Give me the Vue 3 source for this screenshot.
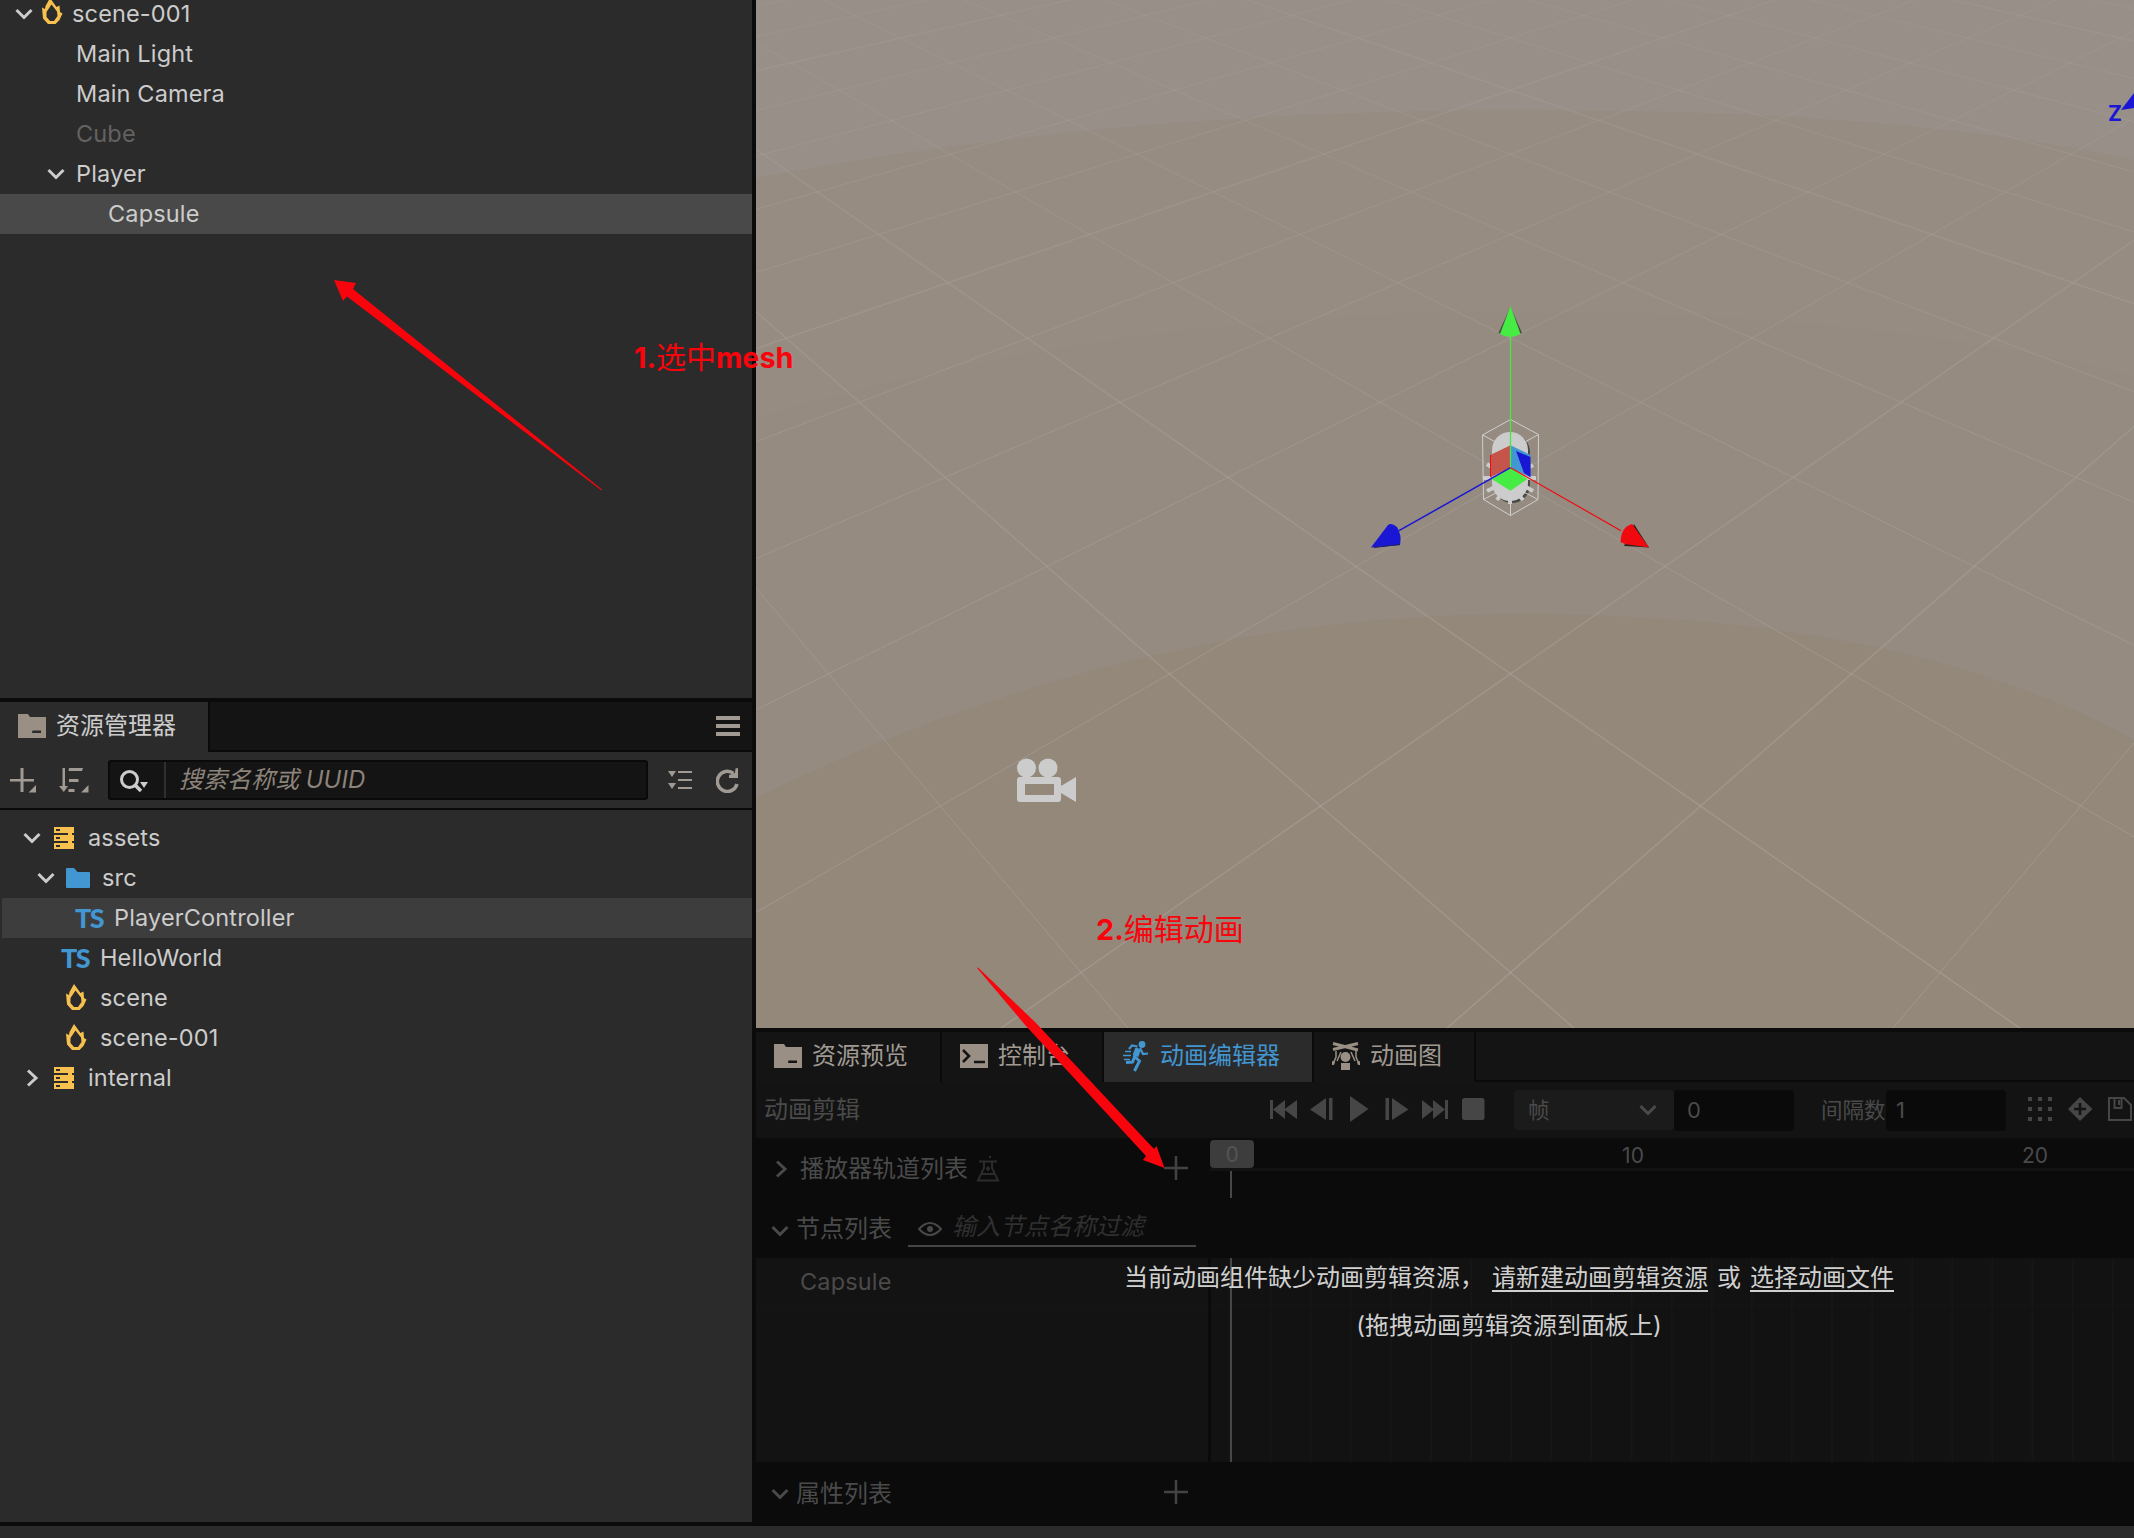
<script setup>
const hierarchy = [
  { name: 'scene-001', text: 73, arrow: 15, fire: 42 },
  { name: 'Main Light', text: 76 },
  { name: 'Main Camera', text: 76 },
  { name: 'Cube', text: 76, disabled: true },
  { name: 'Player', text: 76, arrow: 47 },
  { name: 'Capsule', text: 108, selected: true },
]
const assets = [
  { name: 'assets', text: 88, arrow: 23, icon: 'db', iconX: 54 },
  { name: 'src', text: 102, arrow: 37, icon: 'folder', iconX: 66 },
  { name: 'PlayerController', text: 114, icon: 'ts', iconX: 75, hovered: true },
  { name: 'HelloWorld', text: 100, icon: 'ts', iconX: 61 },
  { name: 'scene', text: 100, icon: 'fire', iconX: 66 },
  { name: 'scene-001', text: 100, icon: 'fire', iconX: 66 },
  { name: 'internal', text: 88, arrow: 25, closed: true, icon: 'db', iconX: 54 },
]

// Perspective floor grid, seen along its diagonal
const project = (x, z) => {
  const h = 1 / (0.00078 + 0.00008965 * z)
  return [1510.5 + x * 0.14825 * h, h - 476]
}
const gridLines = []
for (let m = -25; m <= 25; m += 2) {
  for (const dir of [1, -1]) {
    const [x1, y1] = project(dir * (m + 3), -3)
    const [x2, y2] = project(dir * (m - 17), 17)
    gridLines.push({ x1, y1, x2, y2, strong: Math.abs(m) % 10 === 1 })
  }
}
const frames = Array.from({ length: 23 }, (_, i) => 1230.5 + i * 40.1)
</script>

<template>
  <div class="editor">
    <div class="main">
      <aside class="left">
        <section class="hierarchy">
          <div v-for="(n, i) in hierarchy" :key="i" class="row" :class="{ selected: n.selected, disabled: n.disabled }" :style="{ paddingLeft: (n.arrow || n.text) + 'px' }">
            <svg v-if="n.arrow" class="chev" width="18" height="12" viewBox="0 0 18 12"><path d="M1.5 2 9 9.500 16.500 2" /></svg>
            <svg v-if="n.fire" class="fire after-arrow" width="21" height="27" viewBox="0 0 21 27"><path fill-rule="evenodd" d="M8 0 14.500 9 17.500 7.500 18 14 20.500 15.500 17.500 22 13.500 26 6 26 1 20.500 0 9.500 3 11 3.500 8ZM9.500 6.500 4.500 14 4.500 19 8 23 12 23 15.500 18 15 13.500Z" /></svg>
            <span class="label" :style="{ marginLeft: n.fire ? '9px' : n.arrow ? '11px' : 0 }">{{ n.name }}</span>
          </div>
        </section>

        <section class="assets">
          <header class="panel-head">
            <div class="head-tab">
              <svg width="28" height="24" viewBox="0 0 28 24"><path fill="#9a8f84" fill-rule="evenodd" d="M0 0H10L12 3H28V24H0ZM14.500 16.500 14 19H23V16.500Z" /></svg>
              <span>资源管理器</span>
            </div>
            <div class="head-rest">
              <svg width="24" height="20" viewBox="0 0 24 20"><path fill="#a09a93" d="M0 0H24V4H0ZM0 8H24V12H0ZM0 16H24V20H0Z" /></svg>
            </div>
          </header>
          <div class="asset-tools">
            <svg width="27" height="25" viewBox="0 0 27 25"><path fill="#a09a93" d="M10.500 0H13.500V11H24V13.500H13.500V24H10.500V13.500H0V11H10.500ZM26 17V24.500H18.500Z" /></svg>
            <svg class="sort" width="30" height="25" viewBox="0 0 30 25"><path fill="#a09a93" d="M3.500 0H6V18H9L4.800 24 0 18H3.500ZM10 0H24L23 3H9.500ZM10 11H19.500V14H10ZM9.500 21H15.500V24H9.500ZM29.500 17V24.500H22Z" /></svg>
            <div class="search">
              <div class="search-kind">
                <svg width="29" height="23" viewBox="0 0 29 23"><circle cx="9.500" cy="9.500" r="8" fill="none" stroke="#ccc" stroke-width="3" /><path d="m15 15 6 6" stroke="#ccc" stroke-width="3.500" /><path d="M20 12H28L24 18Z" fill="#ccc" /></svg>
              </div>
              <span>搜索名称或 UUID</span>
            </div>
            <svg class="collapse" width="25" height="20" viewBox="0 0 25 20"><path fill="#a09a93" d="M0 1H8L4 7ZM0 13H8L4 19ZM10 1H24V3H10ZM10 9H24V11H10ZM10 17H24V19H10Z" /></svg>
            <svg class="refresh" width="24" height="25" viewBox="0 0 24 25"><path d="M17.500 5.500A10 10 0 1 0 21 16" fill="none" stroke="#a09a93" stroke-width="3.500" /><path d="M19.500 0.500 22 0V10H13V7L19 5Z" fill="#a09a93" /></svg>
          </div>
          <div class="tree">
            <div v-for="(n, i) in assets" :key="i" class="row" :class="{ hovered: n.hovered }">
              <span class="slot" :style="{ width: n.iconX + 'px', paddingLeft: (n.arrow || 0) + 'px' }">
                <svg v-if="n.arrow && !n.closed" class="chev" width="18" height="12" viewBox="0 0 18 12"><path d="M1.500 2 9 9.500 16.500 2" /></svg>
                <svg v-if="n.closed" class="chev" width="14" height="18" viewBox="0 0 14 18"><path d="M3 1.500 11 9 3 16.500" /></svg>
              </span>
              <span class="slot" :style="{ width: n.text - n.iconX + 'px' }">
                <svg v-if="n.icon === 'db'" width="20" height="22" viewBox="0 0 20 22"><path fill="#f7c14f" fill-rule="evenodd" d="M0 0H20V6H0ZM0 8H20V14H0ZM0 16H20V22H0ZM2 2V4H6V2ZM2 10V12H6V10ZM2 18V20H6V18ZM14 6H18V8H14ZM14 14H18V16H14Z" /></svg>
                <svg v-if="n.icon === 'folder'" width="24" height="20" viewBox="0 0 24 20"><path fill="#4296d1" d="M0 1Q0 0 1 0H8L11.500 4H23Q24 4 24 5V19Q24 20 23 20H1Q0 20 0 19Z" /></svg>
                <b v-if="n.icon === 'ts'" class="ts">TS</b>
                <svg v-if="n.icon === 'fire'" class="fire low" width="21" height="27" viewBox="0 0 21 27"><path fill-rule="evenodd" d="M8 0 14.500 9 17.500 7.500 18 14 20.500 15.500 17.500 22 13.500 26 6 26 1 20.500 0 9.500 3 11 3.500 8ZM9.500 6.500 4.500 14 4.500 19 8 23 12 23 15.500 18 15 13.500Z" /></svg>
              </span>
              <span class="label">{{ n.name }}</span>
            </div>
          </div>
        </section>
      </aside>

      <div class="right">
        <svg class="scene" width="1378" height="1028" viewBox="756 0 1378 1028">
          <defs>
            <linearGradient id="fade" gradientUnits="userSpaceOnUse" x1="0" y1="0" x2="0" y2="1028">
              <stop offset="0" stop-color="#b5aeaa" stop-opacity=".14" />
              <stop offset=".35" stop-color="#b0aaa5" stop-opacity=".32" />
              <stop offset="1" stop-color="#afa6a2" stop-opacity=".5" />
            </linearGradient>
          </defs>
          <rect x="756" width="1378" height="1028" fill="#998f89" />
          <path d="M756 178Q1100 112 1500 110T2134 160V1028H756Z" fill="#978c82" />
          <path d="M756 418Q1100 316 1480 312T2134 376V1028H756Z" fill="#958b81" />
          <path d="M756 798Q1130 614 1520 614T2134 740V1028H756Z" fill="#94887b" />
          <g stroke="url(#fade)" fill="none">
            <line v-for="(l, i) in gridLines" :key="i" :x1="l.x1" :y1="l.y1" :x2="l.x2" :y2="l.y2" :stroke-width="l.strong ? 1.4 : 1" />
          </g>
          <!-- camera -->
          <g fill="#ccc">
            <circle cx="1026.500" cy="768" r="9.500" /><circle cx="1048" cy="768" r="9.500" />
            <path fill-rule="evenodd" d="M1020 777H1058Q1061 777 1061 780V786L1076 777V802L1061 793V799Q1061 802 1058 802H1020Q1017 802 1017 799V780Q1017 777 1020 777ZM1025 784V795H1054V784Z" />
          </g>
          <!-- selected capsule and its bounds -->
          <rect x="1494" y="434" width="36" height="69" rx="18" fill="#4b4946" />
          <rect x="1492" y="432" width="36" height="69" rx="18" fill="#ccc" />
          <path d="M1487 464 1493 468M1483 478H1491M1487 491 1495 487M1497 500 1501 494M1510 504V496M1523 500 1518 494M1533 491 1526 487M1536 478H1528M1533 465 1526 469" stroke="#ccc" stroke-width="4" fill="none" />
          <path d="M1510.500 419.500 1482.500 435 1483.500 499.500 1510.500 515.500 1538 499.500 1538.500 434.500ZM1482.500 435 1510.500 450 1538.500 434.500M1483.500 499.500 1510.500 485 1538 499.500M1510.500 515.500V485" stroke="#d0cfcd" fill="none" />
          <path d="M1490.300 455 1510.500 445.300V467.700L1490.300 477.300Z" fill="#c5544b" /><path d="M1490.500 455V477" stroke="#f00a10" />
          <path d="M1510.500 445.300 1530.500 455V477.500L1510.500 467.700Z" fill="#4296d1" /><path d="M1516 451 1530.500 457V477L1524 473Z" fill="#1a17d4" />
          <path d="M1510.500 467.700 1527.500 479 1510.500 490.700 1492 479.300Z" fill="#46ec43" />
          <path d="M1510.500 335V468" stroke="#46ec43" stroke-width="1.300" />
          <path d="M1399 530.700 1510.500 467.700" stroke="#1a17d4" stroke-width="1.500" />
          <path d="M1621 530.700 1510.500 467.700" stroke="#f00a10" stroke-width="1.200" />
          <path d="M1510.500 307 1498.500 333 1510 336 1522 333Z" fill="#4a4b42" />
          <path d="M1510.500 306 1500 334Q1510 340 1520.500 334Z" fill="#46ec43" />
          <path d="M1371 547.500 1388 525Q1391 522 1397 527 1402 535 1400 545Z" fill="#1a17d4" /><path d="M1374 547.500 1400 544.500" stroke="#20205c" />
          <path d="M1649 547.500 1634 524 1624 546Z" fill="#33231f" />
          <path d="M1649 547.500 1632 524Q1621 527 1620.500 542L1625 544Z" fill="#f00a10" />
          <path d="M2121 110 2134 93V108Z" fill="#1a17d4" />
          <text x="2108" y="121" font-size="21" font-weight="700" fill="#1a17d4" font-family="Inter, sans-serif">Z</text>
        </svg>

        <section class="anim">
          <nav class="tabs">
            <div class="tab t1">
              <svg width="28" height="24" viewBox="0 0 28 24"><path fill="#9a8f84" fill-rule="evenodd" d="M0 0H10L12 3H28V24H0ZM14.500 16.500 14 19H23V16.500Z" /></svg>
              <span>资源预览</span>
            </div>
            <div class="tab t2">
              <svg width="28" height="24" viewBox="0 0 28 24"><path fill="#9a8f84" d="M0 0H28V24H0Z" /><path d="M3 6 9 12 3 18M14 18H25" fill="none" stroke="#141414" stroke-width="2.600" /></svg>
              <span>控制台</span>
            </div>
            <div class="tab t3 active">
              <svg width="26" height="31" viewBox="0 0 26 31"><circle cx="19" cy="3.500" r="3.400" fill="#4296d1" /><g fill="none" stroke="#4296d1"><path d="M6 8 9 4.500 14.500 5.500M17 7 20 13 25 12.500" stroke-width="2.200" /><path d="M14.500 7 11.500 15.500 16.500 20 11.500 30M12 15 9.500 21 3 21.500" stroke-width="3" /><path d="M15 8 12.500 15" stroke-width="6" /><path d="M2 10.500H8M0 14.500H8M1 18.500H7" stroke-width="1.300" /></g></svg>
              <span>动画编辑器</span>
            </div>
            <div class="tab t4">
              <svg width="28" height="28" viewBox="0 0 28 28"><g fill="none" stroke="#9a8f84"><path d="M1 1.500 26 8M1 7.500 26 1.500" stroke-width="3" /><path d="M4 9V15L1 22M24 9V15L27 22M9 10 5 19M19 10 23 19" stroke-width="1.500" /></g><circle cx="13.500" cy="15" r="5" fill="#9a8f84" /><path fill="#9a8f84" d="M9 21H18V28H9ZM0 19 3 20 2 23H0ZM25 20 28 19V23H26Z" /></svg>
              <span>动画图</span>
            </div>
            <div class="tab-rest"></div>
          </nav>

          <div class="toolbar">
            <span class="clip">动画剪辑</span>
            <svg class="play" width="216" height="26" viewBox="0 0 216 26"><g fill="#464646"><path d="M0 4H3V23H0ZM15 4V23L3 13.500ZM27 4V23L14 13.500Z" /><path d="M40 13.500 56 2V24ZM59 2H62.500V24H59Z" /><path d="M80 0 98.500 13 80 26Z" /><path d="M115.500 2H119V24H115.500ZM122 2V24L138.500 13.500Z" /><path d="M152 4V23L164 13.500ZM163 4V23L175 13.500ZM175 4H178V23H175Z" /><rect x="192" y="2" width="22.500" height="22" rx="2.500" /></g></svg>
            <div class="select">
              <span>帧</span>
              <svg class="chev" width="18" height="12" viewBox="0 0 18 12"><path d="M1.500 2 9 9.500 16.500 2" /></svg>
            </div>
            <div class="field f1">0</div>
            <span class="gap-label">间隔数</span>
            <div class="field f2">1</div>
            <svg class="extras" width="106" height="26" viewBox="0 0 106 26"><g fill="#464646"><path d="M0 1h4v4h-4zM10 1h4v4h-4zM20 1h4v4h-4zM0 11h4v4h-4zM10 11h4v4h-4zM20 11h4v4h-4zM0 21h4v4h-4zM10 21h4v4h-4zM20 21h4v4h-4z" /><path d="M52 1 64.500 13 52 25 40 13Z" /></g><path d="M52 7V19M46 13H58" stroke="#131313" stroke-width="2.600" /><path d="M81 2H96L103 9V24H81ZM86.500 2V12H93.500V2M91 4V9" fill="none" stroke="#464646" stroke-width="2" /></svg>
          </div>

          <div class="timeline">
            <div class="side">
              <div class="player-track">
                <svg class="chev" width="14" height="18" viewBox="0 0 14 18"><path d="M3 1.500 11 9 3 16.500" /></svg>
                <span>播放器轨道列表</span>
                <svg class="flask" width="24" height="27" viewBox="0 0 24 27"><path d="M3 5.500H21M8 6V12L2 24.500H22L16 12V6M6 18H18M12 10.500V15M10 12.500H14M14 0V2" fill="none" stroke="#2c2c2c" stroke-width="2" /></svg>
                <svg class="plus" width="24" height="24" viewBox="0 0 24 24"><path d="M12 0V24M0 12H24" stroke="#434343" stroke-width="2.500" /></svg>
              </div>
              <div class="node-head">
                <svg class="chev" width="18" height="12" viewBox="0 0 18 12"><path d="M1.500 2 9 9.500 16.500 2" /></svg>
                <span>节点列表</span>
                <div class="filter">
                  <svg width="24" height="14" viewBox="0 0 24 14"><path d="M1 7Q12-5 23 7 12 19 1 7Z" fill="none" stroke="#484848" stroke-width="2" /><circle cx="12" cy="7" r="3" fill="#484848" /></svg>
                  <i>输入节点名称过滤</i>
                </div>
              </div>
            </div>
            <div class="ruler">
              <div class="ruler-head">
                <span class="cursor">0</span><span class="n10">10</span><span class="n20">20</span>
              </div>
              <div class="stem"></div>
            </div>
          </div>
          <div class="nodes">
            <div class="node-list"><div class="node">Capsule</div></div>
            <svg class="frames" width="923" height="204" viewBox="1211 0 923 204">
              <path v-for="x in frames" :key="x" :d="`M${x} 0V204`" stroke="#161616" stroke-width="2" /><path d="M1211 47.500H2134" stroke="#151515" /><path d="M1231 0V204" stroke="#474747" stroke-width="2" />
            </svg>
          </div>
          <div class="props">
            <svg class="chev" width="18" height="12" viewBox="0 0 18 12"><path d="M1.500 2 9 9.500 16.500 2" /></svg>
            <span>属性列表</span>
            <svg class="plus" width="24" height="24" viewBox="0 0 24 24"><path d="M12 0V24M0 12H24" stroke="#434343" stroke-width="2.500" /></svg>
          </div>

          <div class="notice">
            <p><span>当前动画组件缺少动画剪辑资源，</span><u>请新建动画剪辑资源</u><span class="or">或</span><u>选择动画文件</u></p>
            <p>(拖拽动画剪辑资源到面板上)</p>
          </div>
        </section>
      </div>
    </div>
    <footer class="status"></footer>

    <svg class="marks" width="2134" height="1538" viewBox="0 0 2134 1538">
      <path fill="#f8040c" d="M334 280 356 283 353 289 602 489.500 601.500 490.500 347 296.500 343 301Z" />
      <path fill="#f8040c" d="M977 968 978 967.500 1036 1023 1154 1149 1156.500 1146 1164.500 1168 1143 1160 1146 1156 1026 1026Z" />
    </svg>
    <div class="note note1"><b>1.</b>选中<b>mesh</b></div>
    <div class="note note2"><b>2.</b>编辑动画</div>
  </div>
</template>

<style>
body { background: #0b0b0b; }
</style>

<style scoped>
.editor { position: relative; width: 2134px; height: 1538px; overflow: hidden; display: flex; flex-direction: column; background: #0b0b0b; color: #ccc; font: 24px/40px Inter, "Noto Sans CJK SC", sans-serif; }
svg { display: block; flex: none; }
span { white-space: nowrap; }
.main { display: flex; gap: 4px; height: 1522px; }
.left { width: 752px; display: flex; flex-direction: column; gap: 4px; }
.hierarchy { height: 698px; background: #2b2b2b; overflow: hidden; }
.hierarchy .row:first-child { margin-top: -6px; }
.row { height: 40px; display: flex; align-items: center; box-sizing: border-box; }
.label { font-size: 23.5px; letter-spacing: 0.15px; }
.selected { background: #494949; }
.disabled { color: #646260; }
.chev path { fill: none; stroke: #ccc; stroke-width: 3; }
.fire path { fill: #f7c14f; }
.after-arrow { margin-left: 9px; margin-top: -5px; }
.low { margin-top: -2px; }
.assets { height: 820px; background: #2b2b2b; }
.panel-head { display: flex; height: 50px; }
.head-tab { width: 208px; box-sizing: border-box; padding-left: 18px; display: flex; align-items: center; gap: 10px; padding-bottom: 2px; }
.head-rest { flex: 1; display: flex; align-items: center; justify-content: flex-end; padding-right: 12px; background: #141414; border-left: 2px solid #0a0a0a; border-bottom: 2px solid #0a0a0a; }
.asset-tools { height: 56px; display: flex; align-items: center; padding-left: 10px; border-bottom: 2px solid #0a0a0a; }
.sort { margin-left: 22px; }
.search { flex: none; width: 540px; height: 40px; box-sizing: border-box; margin-left: 19px; display: flex; align-items: center; background: #141414; border: 2px solid #0a0a0a; border-radius: 3px; color: #8c837a; font-style: italic; }
.search-kind { width: 56px; height: 36px; box-sizing: border-box; padding: 8px 0 0 10px; border-right: 2px solid #2f2f2f; margin-right: 13px; }
.collapse { margin-left: 20px; }
.refresh { margin-left: 23px; }
.tree { padding-top: 8px; }
.hovered { background: #3d3d3d; margin-left: 2px; }
.hovered .slot:first-child { margin-left: -2px; }
.slot { flex: none; box-sizing: border-box; display: flex; align-items: center; }
.ts { color: #4296d1; font: 900 27px/40px Lato, sans-serif; letter-spacing: -1.5px; }

.right { width: 1378px; display: flex; flex-direction: column; gap: 4px; }
.anim { position: relative; height: 490px; color: #4a4a4a; }
.tabs { display: flex; height: 50px; gap: 2px; background: #0a0a0a; }
.tab { box-sizing: border-box; background: #141414; display: flex; align-items: center; gap: 10px; padding-left: 18px; color: #a09a93; padding-bottom: 2px; }
.t1 { width: 184px; }
.t2 { width: 160px; }
.t3 { width: 208px; gap: 11px; padding-left: 19px; }
.t4 { width: 160px; }
.active { background: #2b2b2b; color: #4296d1; }
.tab-rest { flex: 1; height: 48px; background: #141414; }
.toolbar { height: 56px; background: #131313; display: flex; align-items: center; overflow: hidden; }
.clip { flex: none; width: 514px; box-sizing: border-box; padding-left: 8px; }
.play { margin-top: -2px; }
.select { flex: none; width: 160px; height: 40px; box-sizing: border-box; margin-left: 28px; padding: 0 17px 0 14px; border-radius: 4px; background: #1b1b1b; display: flex; align-items: center; justify-content: space-between; font-size: 21.5px; }
.anim .chev path { stroke: #4a4a4a; }
.field { width: 120px; height: 41px; box-sizing: border-box; background: #0a0a0a; border-radius: 4px; font-size: 22px; line-height: 41px; padding-left: 13px; flex: none; }
.f2 { padding-left: 10px; }
.gap-label { width: 92px; padding-left: 27px; box-sizing: border-box; font-size: 21.5px; flex: none; }
.extras { margin-left: 22px; margin-top: -3px; }
.timeline { display: flex; height: 120px; background: #0b0b0b; }
.side { width: 454px; }
.player-track { display: flex; align-items: center; height: 62px; padding-left: 18px; }
.player-track span { margin-left: 12px; }
.flask { margin-left: 8px; }
.plus { margin-left: 164px; margin-top: -2px; }
.node-head { display: flex; align-items: flex-start; height: 49px; padding-left: 15px; }
.node-head > .chev { margin-top: 25px; }
.node-head > span { margin-left: 7px; margin-top: 9px; }
.filter { width: 288px; height: 39px; box-sizing: border-box; margin: 8px 0 0 16px; padding-left: 10px; display: flex; align-items: center; gap: 10px; border-bottom: 2px solid #464646; }
.filter svg { margin-top: 4px; }
.filter i { color: #303030; }
.ruler { width: 924px; }
.ruler-head { height: 30px; display: flex; border-bottom: 3px solid #121212; font-size: 21px; line-height: 35px; }
.cursor { width: 44px; height: 28px; margin-top: 2px; line-height: 30px; text-align: center; border-radius: 4px; background: #3d3d3d; color: #545454; }
.n10 { width: 60px; margin-left: 349px; text-align: center; }
.n20 { width: 60px; margin-left: 342px; text-align: center; }
.stem { width: 2px; height: 27px; margin-left: 20px; background: #474747; }
.nodes { display: flex; height: 204px; justify-content: space-between; background: #0b0b0b; }
.node-list { width: 452px; background: #131313; }
.node { height: 47px; border-bottom: 1px solid #151515; padding-left: 44px; line-height: 47px; font-size: 23.5px; letter-spacing: .15px; }
.frames { background: #121212; }
.props { height: 60px; display: flex; align-items: center; padding-left: 15px; background: #0b0b0b; }
.props > .chev { margin-top: 3px; }
.props span { margin-left: 7px; margin-top: 4px; }
.props .plus { margin-left: 272px; margin-top: 0; }
.notice { position: absolute; left: 0; top: 226px; width: 1506px; text-align: center; color: #d0d0d0; }
.notice p { margin: 0 0 8px; }
.notice u { text-decoration-thickness: 2px; text-underline-offset: 4px; }
.notice p:first-child u:nth-child(2) { margin-left: 8px; }
.or { margin: 0 9px; }
.status { margin-top: 4px; height: 12px; background: #2b2b2b; }
.marks { position: absolute; left: 0; top: 0; }
.note { position: absolute; color: #f8040c; font: 400 30px/44px Inter, "Noto Sans CJK SC", sans-serif; white-space: nowrap; }
.note b { font-weight: 700; font-size: 28.8px; }
.note1 { left: 634px; top: 335px; }
.note2 { left: 1096px; top: 907px; }
</style>
